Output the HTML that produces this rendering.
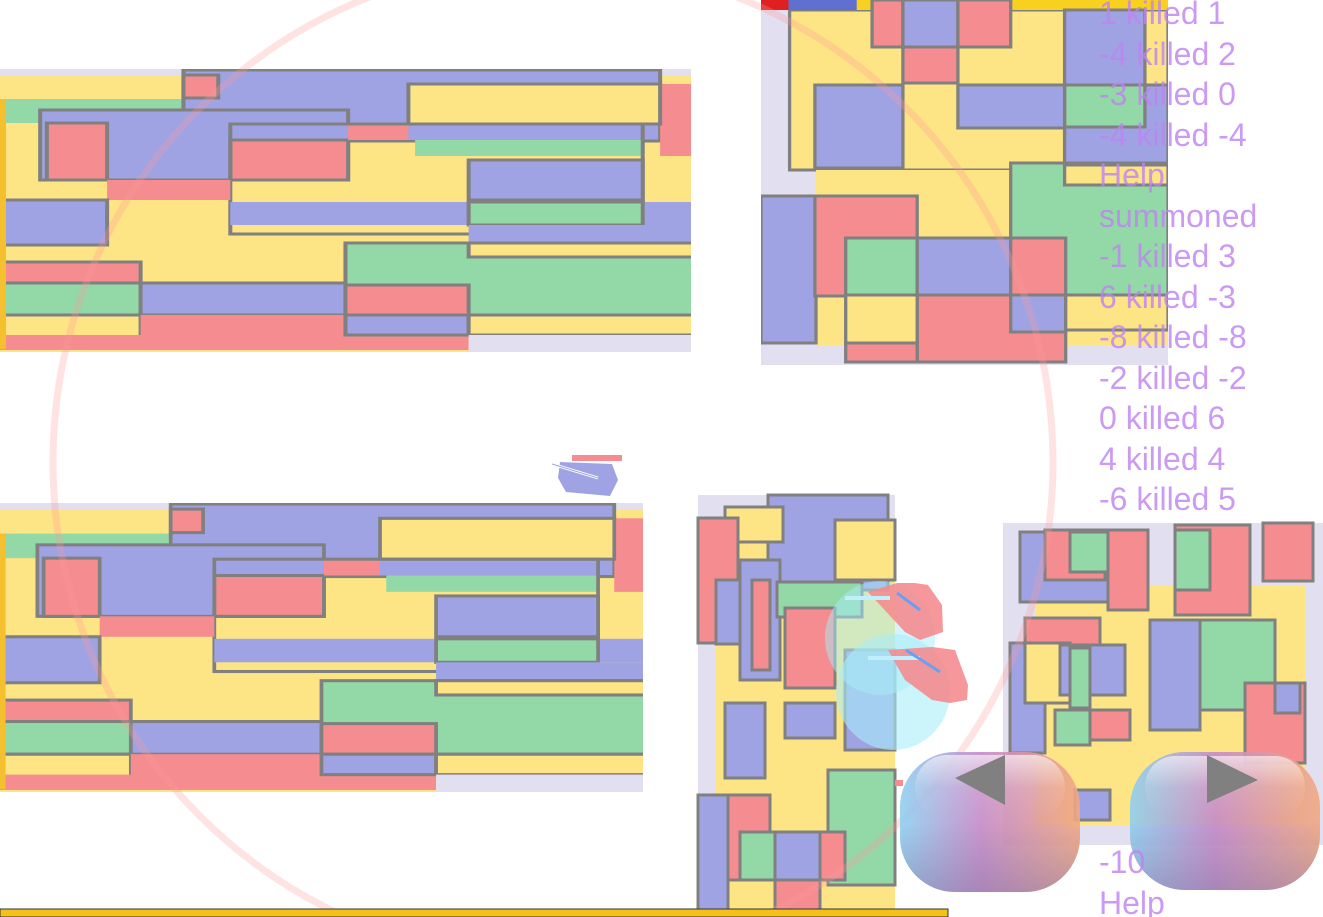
<!DOCTYPE html>
<html><head><meta charset="utf-8"><style>
html,body{margin:0;padding:0;background:#fff;width:1323px;height:917px;overflow:hidden;position:relative}
svg{position:absolute;left:0;top:0}
.log{position:absolute;left:1099px;top:-7px;font-family:"Liberation Sans",sans-serif;font-size:32px;line-height:40.5px;color:rgba(190,130,240,0.8)}
</style></head><body>
<svg width="1323" height="917" viewBox="0 0 1323 917">
<defs>
<linearGradient id="bg" x1="0" x2="1" y1="0" y2="0">
<stop offset="0" stop-color="#8fd0f0"/><stop offset="0.45" stop-color="#c58ac8"/><stop offset="1" stop-color="#f2a880"/></linearGradient>
<linearGradient id="bt" x1="0" x2="0" y1="0" y2="1">
<stop offset="0" stop-color="#fff" stop-opacity="0.6"/><stop offset="0.5" stop-color="#fff" stop-opacity="0.1"/><stop offset="1" stop-color="#fff" stop-opacity="0"/></linearGradient>
<linearGradient id="bs" x1="0" x2="0" y1="0" y2="1">
<stop offset="0.5" stop-color="#8070a0" stop-opacity="0"/><stop offset="1" stop-color="#8070a0" stop-opacity="0.45"/></linearGradient>
<clipPath id="trc"><rect x="761" y="0" width="407" height="366"/></clipPath>
<g id="p1" stroke="#808080" stroke-width="3">
<rect x="0" y="0" width="691" height="283" fill="#e2dff0" stroke="none"/>
<g transform="scale(1.339 1)">
<rect x="0" y="6" width="516" height="277" fill="#fde485" stroke="none"/>
<rect x="0" y="30" width="137" height="24" fill="#93d9a7" stroke="none"/>
<rect x="137" y="1" width="356" height="71" fill="#9fa3e3"/>
<rect x="137" y="6" width="26" height="23" fill="#f48c90"/>
<rect x="140" y="41" width="120" height="30" fill="#93d9a7" stroke="none"/>
<rect x="30" y="41" width="230" height="70" fill="#9fa3e3"/>
<rect x="35" y="54" width="45" height="57" fill="#f48c90"/>
<rect x="172" y="55" width="308" height="16" fill="#9fa3e3" stroke="none"/>
<rect x="172" y="71" width="88" height="40" fill="#f48c90"/>
<rect x="260" y="55" width="45" height="16" fill="#f48c90" stroke="none"/>
<rect x="493" y="15" width="198" height="72" fill="#f48c90" stroke="none"/>
<rect x="305" y="15" width="188" height="40" fill="#fde485"/>
<rect x="310" y="71" width="170" height="16" fill="#93d9a7" stroke="none"/>
<rect x="172" y="55" width="308" height="110" fill="none"/>
<rect x="80" y="111" width="92" height="20" fill="#f48c90" stroke="none"/>
<rect x="0" y="131" width="80" height="45" fill="#9fa3e3"/>
<rect x="172" y="133" width="519" height="23" fill="#9fa3e3" stroke="none"/>
<rect x="350" y="91" width="130" height="40" fill="#9fa3e3"/>
<rect x="350" y="133" width="130" height="23" fill="#93d9a7"/>
<rect x="350" y="156" width="341" height="18" fill="#9fa3e3" stroke="none"/>
<rect x="258" y="174" width="433" height="72" fill="#93d9a7"/>
<rect x="350" y="174" width="341" height="14" fill="#fde485"/>
<rect x="0" y="193" width="105" height="21" fill="#f48c90"/>
<rect x="0" y="214" width="105" height="32" fill="#93d9a7"/>
<rect x="105" y="214" width="153" height="32" fill="#9fa3e3"/>
<rect x="0" y="246" width="105" height="25" fill="#fde485"/>
<rect x="0" y="266" width="350" height="15" fill="#f48c90" stroke="none"/>
<rect x="105" y="246" width="153" height="25" fill="#f48c90" stroke="none"/>
<rect x="258" y="216" width="92" height="30" fill="#f48c90"/>
<rect x="258" y="246" width="92" height="20" fill="#9fa3e3"/>
<rect x="350" y="246" width="341" height="20" fill="#fde485"/>
<rect x="350" y="266" width="341" height="17" fill="#e2dff0" stroke="none"/>
</g>
<rect x="0" y="30" width="6" height="250" fill="#f4c030" stroke="none"/>
</g>
</defs>
<svg x="0" y="69" width="691" height="283" viewBox="0 0 691 283" preserveAspectRatio="none"><use href="#p1"/></svg>
<svg x="0" y="503" width="643" height="289" viewBox="0 0 691 283" preserveAspectRatio="none"><use href="#p1"/></svg>

<g clip-path="url(#trc)">
<g stroke="#808080" stroke-width="3" transform="translate(761 0) scale(1.1 1) translate(-761 0)">
<rect x="761" y="0" width="370" height="365" fill="#e2dff0" stroke="none"/>
<rect x="787" y="10" width="344" height="160" fill="#fde485"/>
<rect x="811" y="170" width="320" height="175" fill="#fde485" stroke="none"/>
<rect x="761" y="0" width="370" height="10" fill="#f8d020" stroke="none"/>
<rect x="761" y="0" width="25" height="10" fill="#e02020" stroke="none"/>
<rect x="786" y="0" width="62" height="10" fill="#6070d0" stroke="none"/>
<rect x="862" y="0" width="28" height="47" fill="#f48c90"/>
<rect x="890" y="0" width="50" height="47" fill="#9fa3e3"/>
<rect x="940" y="0" width="48" height="47" fill="#f48c90"/>
<rect x="890" y="47" width="50" height="36" fill="#f48c90"/>
<rect x="1037" y="10" width="73" height="75" fill="#9fa3e3"/>
<rect x="1037" y="85" width="94" height="80" fill="#9fa3e3"/>
<rect x="1037" y="85" width="73" height="42" fill="#93d9a7"/>
<rect x="810" y="85" width="80" height="83" fill="#9fa3e3"/>
<rect x="940" y="85" width="97" height="43" fill="#9fa3e3"/>
<rect x="988" y="163" width="143" height="132" fill="#93d9a7"/>
<rect x="1037" y="165" width="94" height="20" fill="#fde485"/>
<rect x="761" y="196" width="50" height="147" fill="#9fa3e3"/>
<rect x="810" y="196" width="93" height="100" fill="#f48c90"/>
<rect x="838" y="238" width="65" height="57" fill="#93d9a7"/>
<rect x="903" y="238" width="85" height="57" fill="#9fa3e3"/>
<rect x="988" y="238" width="50" height="57" fill="#f48c90"/>
<rect x="903" y="295" width="135" height="67" fill="#f48c90"/>
<rect x="838" y="295" width="65" height="48" fill="#fde485"/>
<rect x="838" y="343" width="65" height="19" fill="#f48c90"/>
<rect x="988" y="295" width="50" height="37" fill="#9fa3e3"/>
<rect x="1038" y="295" width="93" height="35" fill="#fde485"/>
</g>
</g>

<g stroke="#808080" stroke-width="3">
<rect x="698" y="495" width="197" height="415" fill="#e2dff0" stroke="none"/>
<rect x="716" y="540" width="179" height="370" fill="#fde485" stroke="none"/>
<rect x="768" y="495" width="120" height="95" fill="#9fa3e3"/>
<rect x="725" y="507" width="58" height="35" fill="#fde485"/>
<rect x="698" y="518" width="40" height="125" fill="#f48c90"/>
<rect x="716" y="580" width="30" height="64" fill="#9fa3e3"/>
<rect x="740" y="560" width="40" height="120" fill="#9fa3e3"/>
<rect x="752" y="580" width="18" height="90" fill="#f48c90"/>
<rect x="835" y="520" width="60" height="60" fill="#fde485"/>
<rect x="777" y="582" width="85" height="35" fill="#93d9a7"/>
<rect x="785" y="608" width="50" height="80" fill="#f48c90"/>
<rect x="725" y="703" width="40" height="75" fill="#9fa3e3"/>
<rect x="785" y="703" width="50" height="35" fill="#9fa3e3"/>
<rect x="828" y="770" width="67" height="115" fill="#93d9a7"/>
<rect x="698" y="795" width="30" height="115" fill="#9fa3e3"/>
<rect x="728" y="795" width="42" height="85" fill="#f48c90"/>
<rect x="740" y="832" width="35" height="48" fill="#93d9a7"/>
<rect x="775" y="832" width="45" height="48" fill="#9fa3e3"/>
<rect x="820" y="832" width="25" height="48" fill="#f48c90"/>
<rect x="775" y="880" width="45" height="30" fill="#f48c90"/>
<rect x="845" y="650" width="50" height="100" fill="#9fa3e3"/>
</g>

<g stroke="#808080" stroke-width="3">
<rect x="1003" y="523" width="320" height="322" fill="#e2dff0" stroke="none"/>
<rect x="1035" y="585" width="270" height="240" fill="#fde485" stroke="none"/>
<rect x="1020" y="532" width="100" height="70" fill="#9fa3e3"/>
<rect x="1045" y="530" width="60" height="50" fill="#f48c90"/>
<rect x="1070" y="532" width="70" height="40" fill="#93d9a7"/>
<rect x="1108" y="530" width="40" height="80" fill="#f48c90"/>
<rect x="1175" y="525" width="75" height="90" fill="#f48c90"/>
<rect x="1175" y="530" width="35" height="60" fill="#93d9a7"/>
<rect x="1263" y="523" width="50" height="58" fill="#f48c90"/>
<rect x="1025" y="618" width="75" height="30" fill="#f48c90"/>
<rect x="1010" y="643" width="35" height="110" fill="#9fa3e3"/>
<rect x="1025" y="643" width="45" height="60" fill="#fde485"/>
<rect x="1060" y="645" width="65" height="50" fill="#9fa3e3"/>
<rect x="1070" y="648" width="20" height="60" fill="#93d9a7"/>
<rect x="1150" y="620" width="50" height="110" fill="#9fa3e3"/>
<rect x="1200" y="620" width="75" height="90" fill="#93d9a7"/>
<rect x="1245" y="683" width="60" height="80" fill="#f48c90"/>
<rect x="1275" y="683" width="25" height="30" fill="#9fa3e3"/>
<rect x="1055" y="710" width="35" height="35" fill="#93d9a7"/>
<rect x="1090" y="710" width="40" height="30" fill="#f48c90"/>
<rect x="1075" y="790" width="35" height="30" fill="#9fa3e3"/>
</g>

<circle cx="553" cy="462" r="500" fill="none" stroke="#ff9999" stroke-opacity="0.28" stroke-width="7"/>

<path d="M560 462 L612 464 L618 480 L610 496 L566 492 L558 478 Z" fill="#9fa3e3"/>
<rect x="572" y="455" width="50" height="6" fill="#f48c90"/>
<line x1="552" y1="464" x2="598" y2="478" stroke="#fff" stroke-width="3"/>
<line x1="552" y1="464" x2="598" y2="478" stroke="#9fa3e3" stroke-width="1"/>

<ellipse cx="880" cy="638" rx="55" ry="57" fill="#a8ecf8" fill-opacity="0.5"/>
<ellipse cx="893" cy="692" rx="57" ry="58" fill="#a8ecf8" fill-opacity="0.6"/>
<path d="M868 592 L897 583 L915 583 L928 585 L942 605 L943 632 L920 640 L905 632 Z" fill="#f48c90" fill-opacity="0.9"/>
<path d="M888 650 L932 647 L955 650 L968 685 L967 700 L950 703 L932 700 L905 680 Z" fill="#f48c90" fill-opacity="0.9"/>
<line x1="845" y1="598" x2="890" y2="598" stroke="#c0f0ff" stroke-width="4"/>
<line x1="868" y1="658" x2="920" y2="658" stroke="#c0f0ff" stroke-width="4"/>
<line x1="897" y1="593" x2="920" y2="610" stroke="#6aa0f0" stroke-width="3"/>
<line x1="906" y1="650" x2="940" y2="672" stroke="#6aa0f0" stroke-width="3"/>
<rect x="895" y="780" width="8" height="6" fill="#f48c90"/>

<rect x="0" y="909" width="948" height="8" fill="#f5c018" stroke="#333" stroke-width="1"/>

<g>
<rect x="900" y="752" width="180" height="140" rx="55" fill="url(#bg)" opacity="0.9"/>
<rect x="900" y="752" width="180" height="140" rx="55" fill="url(#bs)"/>
<rect x="915" y="755" width="150" height="65" rx="32" fill="url(#bt)"/>
<polygon points="955,778 1005,755 1005,805" fill="#808080"/>
<rect x="1130" y="752" width="190" height="138" rx="55" fill="url(#bg)" opacity="0.9"/>
<rect x="1130" y="752" width="190" height="138" rx="55" fill="url(#bs)"/>
<rect x="1145" y="756" width="160" height="62" rx="30" fill="url(#bt)"/>
<polygon points="1207,755 1258,780 1207,803" fill="#808080"/>
</g>
</svg>
<div class="log">1 killed 1<br>-4 killed 2<br>-3 killed 0<br>-4 killed -4<br>Help<br>summoned<br>-1 killed 3<br>6 killed -3<br>-8 killed -8<br>-2 killed -2<br>0 killed 6<br>4 killed 4<br>-6 killed 5</div>
<div class="log" style="top:842px">-10<br>Help</div>
</body></html>
